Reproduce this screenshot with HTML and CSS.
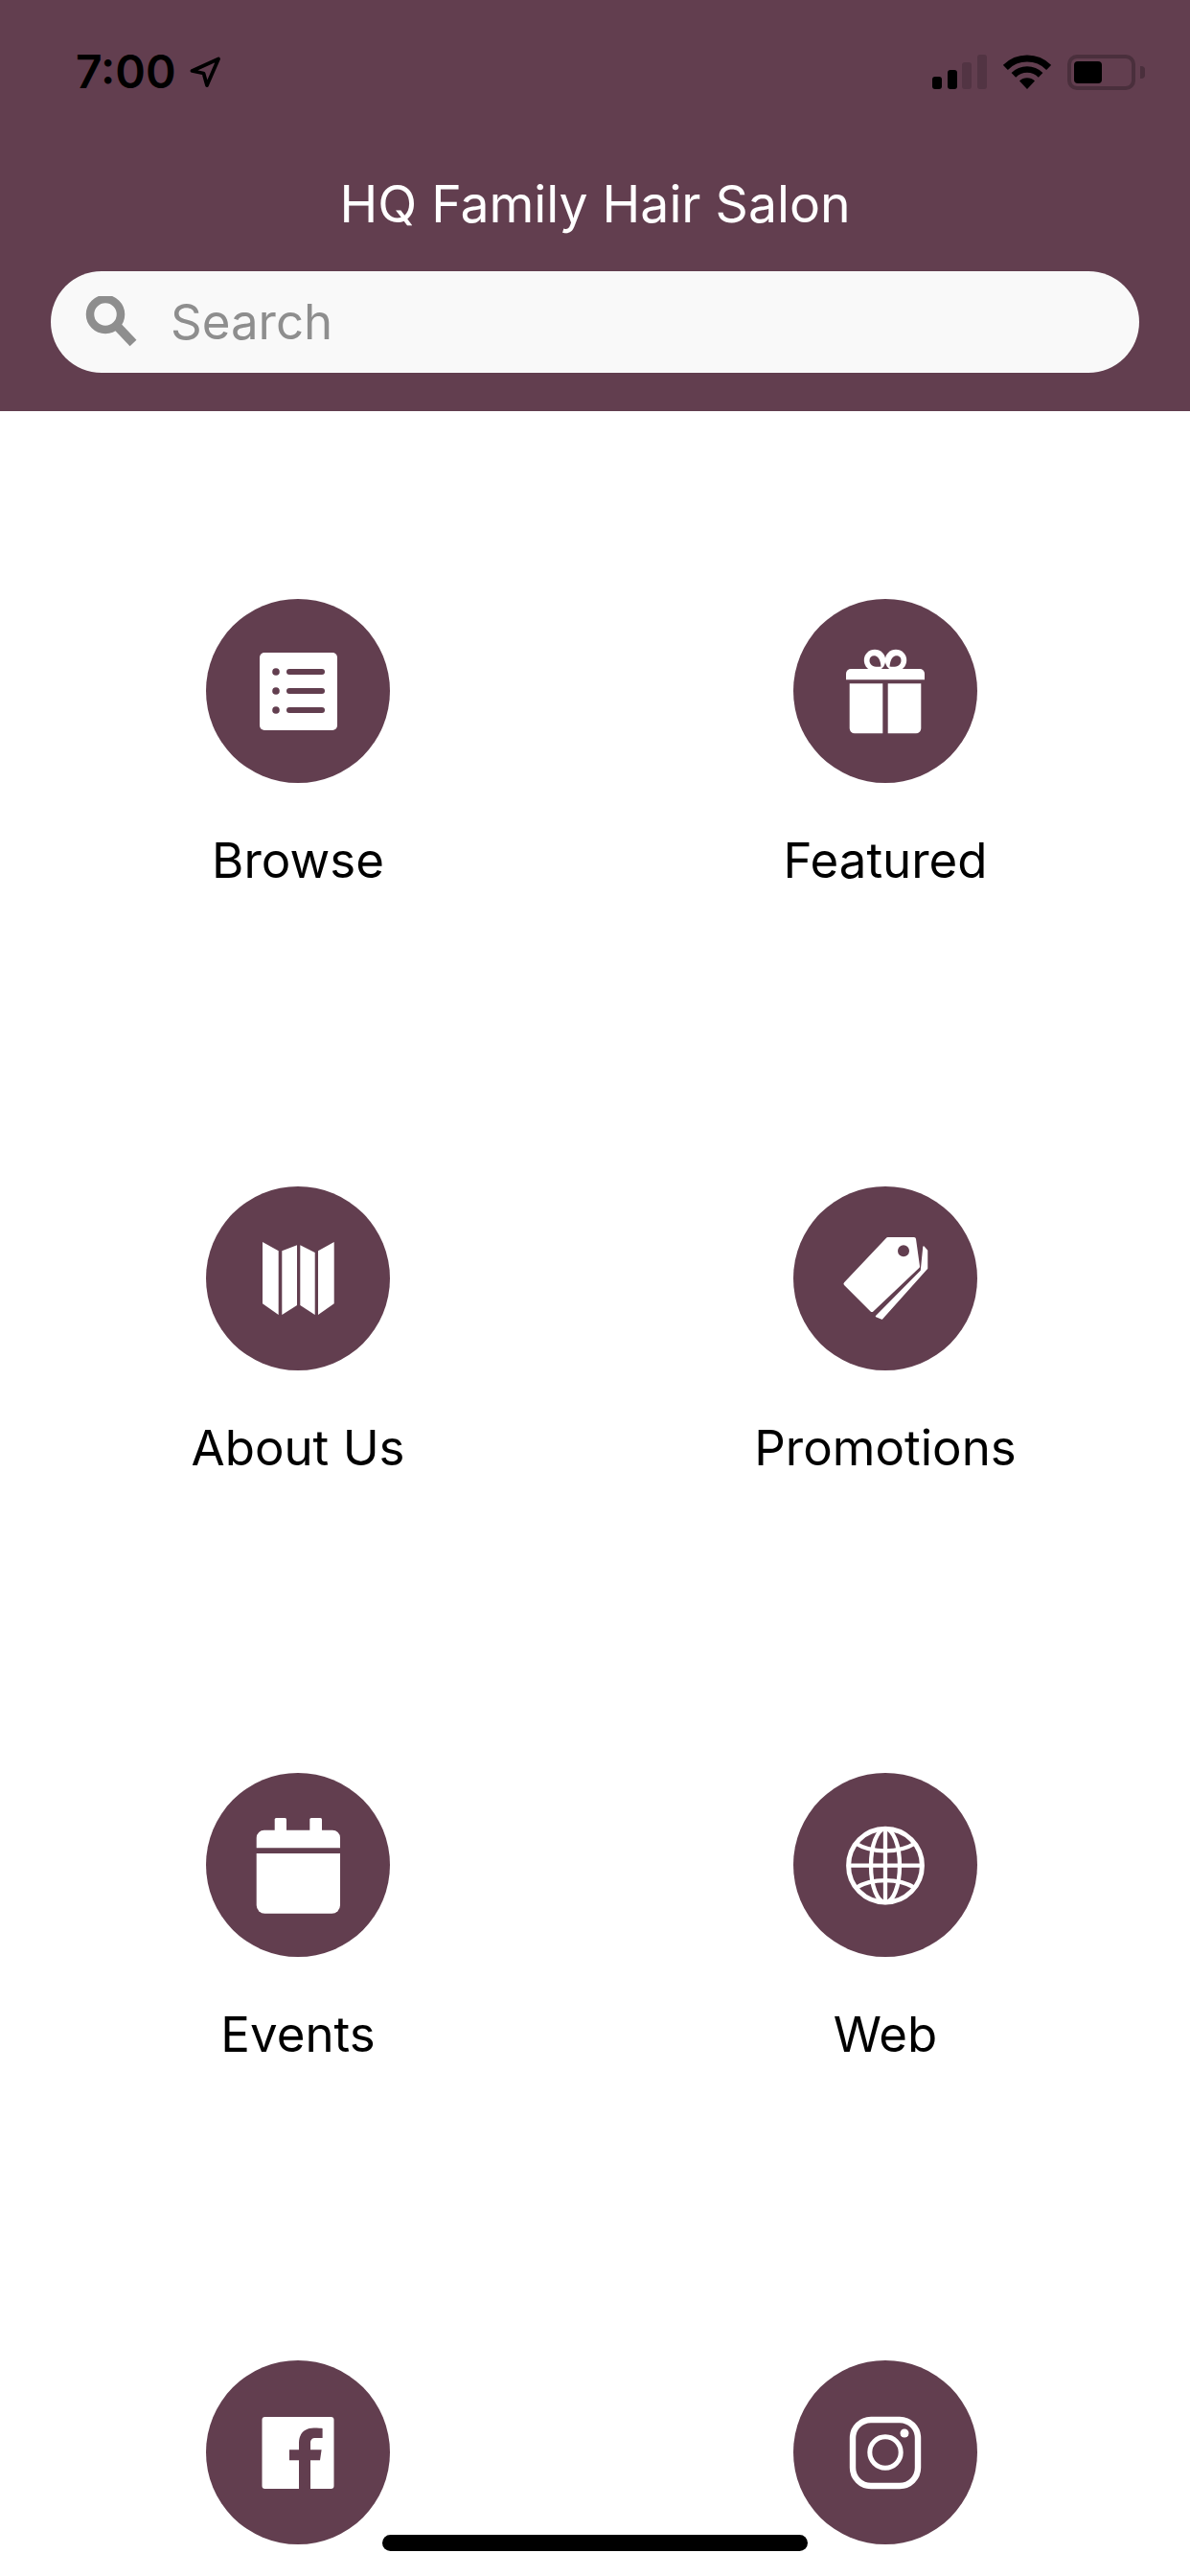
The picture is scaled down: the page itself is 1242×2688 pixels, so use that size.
FILE: index.html
```html
<!DOCTYPE html>
<html lang="en">

<head>
    <meta charset="UTF-8">
    <meta name="viewport" content="width=device-width, initial-scale=1.0">
    <title>HQ Family Hair Salon</title>
    <link rel="stylesheet" href="styles.css">
</head>

<body>
    <div class="screen">
        <header class="header">
            <div class="status">
                <div class="status-left">
                    <span class="time">7:00</span>
                    <svg class="arrow" width="32" height="32" viewBox="0 0 32 32">
                        <path d="M2.5 15 L30 2.5 L18 30 L14.5 17.5 Z" fill="none" stroke="#000" stroke-width="3.8" stroke-linejoin="round" />
                    </svg>
                </div>
                <div class="status-right">
                    <svg width="57" height="36" viewBox="0 0 57 36">
                        <rect x="0" y="23" width="10" height="13" rx="3" fill="#000" />
                        <rect x="16" y="16" width="10" height="20" rx="3" fill="#000" />
                        <rect x="31" y="8" width="10" height="28" rx="3" fill="#523443" />
                        <rect x="47" y="0" width="10" height="36" rx="3" fill="#523443" />
                    </svg>
                    <svg width="50" height="36" viewBox="0 0 50 36">
                        <path d="M2.4 13.4 A32 32 0 0 1 47.6 13.4" fill="none" stroke="#000" stroke-width="7" />
                        <path d="M10.9 21.4 A20 20 0 0 1 39.1 21.4" fill="none" stroke="#000" stroke-width="6.5" />
                        <path d="M25 36 L17 27.5 A11.5 11.5 0 0 1 33 27.5 Z" fill="#000" />
                    </svg>
                    <div class="battery">
                        <div class="battery-shell">
                            <div class="battery-fill"></div>
                        </div>
                        <div class="battery-cap"></div>
                    </div>
                </div>
            </div>
            <h1 class="title">HQ Family Hair Salon</h1>
            <div class="search">
                <svg class="search-icon" width="54" height="54" viewBox="0 0 54 54">
                    <circle cx="21" cy="19" r="16" fill="none" stroke="#8e8e8e" stroke-width="8.5" />
                    <path d="M33 31 L50 49" fill="none" stroke="#8e8e8e" stroke-width="9.5" />
                </svg>
                <span class="search-text">Search</span>
            </div>
        </header>

        <main class="grid">
            <div class="tile">
                <div class="circle">
                    <svg width="192" height="192" viewBox="0 0 192 192">
                        <rect x="56" y="56" width="81" height="81" rx="5" fill="#fff" />
                        <g fill="#623e4f">
                            <circle cx="73" cy="76" r="3.8" />
                            <circle cx="73" cy="96" r="3.8" />
                            <circle cx="73" cy="116" r="3.8" />
                        </g>
                        <g stroke="#623e4f" stroke-width="6" stroke-linecap="round">
                            <path d="M87 76 H121" />
                            <path d="M87 96 H121" />
                            <path d="M87 116 H121" />
                        </g>
                    </svg>
                </div>
                <div class="label">Browse</div>
            </div>
            <div class="tile">
                <div class="circle">
                    <svg width="192" height="192" viewBox="0 0 192 192">
                        <g fill="#fff">
                            <circle cx="85" cy="64" r="11.2" />
                            <circle cx="107" cy="64" r="11.2" />
                        </g>
                        <g fill="#623e4f">
                            <path d="M91.5 70.5 C85 71.5 79.5 70 79.5 64 C79.5 60 83 58.5 86 59.5 C90 61 91 66 91.5 70.5 Z" />
                            <path d="M100.5 70.5 C107 71.5 112.5 70 112.5 64 C112.5 60 109 58.5 106 59.5 C102 61 101 66 100.5 70.5 Z" />
                        </g>
                        <g fill="#fff">
                            <path d="M60 73 H132 A5 5 0 0 1 137 78 V84.3 H55 V78 A5 5 0 0 1 60 73 Z" />
                            <path d="M58.7 88.3 H93.3 V140.3 H64 A5.3 5.3 0 0 1 58.7 135 Z" />
                            <path d="M98.7 88.3 H133.3 V135 A5.3 5.3 0 0 1 128 140.3 H98.7 Z" />
                        </g>
                    </svg>
                </div>
                <div class="label">Featured</div>
            </div>
            <div class="tile">
                <div class="circle">
                    <svg width="192" height="192" viewBox="0 0 192 192">
                        <g fill="#fff">
                            <path d="M59 58 L75.7 67.3 V134 L59 122.3 Z" />
                            <path d="M79.3 67.3 L95 61.3 V124 L79.3 134 Z" />
                            <path d="M98.3 61.3 L113.7 69 V134 L98.3 124 Z" />
                            <path d="M117 67.3 L133.7 58 V122.3 L117 134 Z" />
                        </g>
                    </svg>
                </div>
                <div class="label">About Us</div>
            </div>
            <div class="tile">
                <div class="circle">
                    <svg width="192" height="192" viewBox="0 0 192 192">
                        <path d="M54.5 101.5 L98.5 55 H126 L130 83.5 L82 129 Z" fill="#fff" stroke="#fff" stroke-width="4" stroke-linejoin="round" />
                        <circle cx="115" cy="67.3" r="6" fill="#623e4f" />
                        <path d="M136 63 L139.5 67 V85.5 L92.5 138 L86.5 135.5 L133.5 88 Z" fill="#fff" stroke="#fff" stroke-width="1.5" stroke-linejoin="round" />
                    </svg>
                </div>
                <div class="label">Promotions</div>
            </div>
            <div class="tile">
                <div class="circle">
                    <svg width="192" height="192" viewBox="0 0 192 192">
                        <g fill="#fff">
                            <rect x="71.7" y="47" width="12.3" height="16" rx="1.5" />
                            <rect x="108.3" y="47" width="12.7" height="16" rx="1.5" />
                            <path d="M61 59.7 H132 A8 8 0 0 1 140 67.7 V78.3 H52.7 V67.7 A8 8 0 0 1 61 59.7 Z" />
                            <path d="M52.7 84 H140 V138 A8.7 8.7 0 0 1 131.3 146.7 H61.4 A8.7 8.7 0 0 1 52.7 138 Z" />
                        </g>
                    </svg>
                </div>
                <div class="label">Events</div>
            </div>
            <div class="tile">
                <div class="circle">
                    <svg width="192" height="192" viewBox="0 0 192 192">
                        <g fill="none" stroke="#fff" stroke-width="4.3">
                            <circle cx="96" cy="96.7" r="38.4" stroke-width="5" />
                            <ellipse cx="96" cy="96.7" rx="15" ry="38.4" />
                            <path d="M96 58 V135.3" />
                            <path d="M58 96.7 H134" />
                            <path d="M65 73.5 C82 84 110 84 127 73.5" />
                            <path d="M65 120 C82 109.5 110 109.5 127 120" />
                        </g>
                    </svg>
                </div>
                <div class="label">Web</div>
            </div>
            <div class="tile">
                <div class="circle">
                    <svg width="192" height="192" viewBox="0 0 192 192">
                        <rect x="58.5" y="59" width="75" height="75" rx="3" fill="#fff" />
                        <path d="M109 134 V104.3 H119 L120.6 93.3 H109 V86.5 C109 83 110.3 81 114.5 81 H121.6 V71 C120.4 70.8 116.8 70.6 112.6 70.6 C103.4 70.6 97 76 97 86 V93.3 H87 V104.3 H97 V134 Z" fill="#623e4f" />
                    </svg>
                </div>
            </div>
            <div class="tile">
                <div class="circle">
                    <svg width="192" height="192" viewBox="0 0 192 192">
                        <rect x="62" y="62" width="68" height="69" rx="19" fill="none" stroke="#fff" stroke-width="6.4" />
                        <circle cx="96" cy="96" r="16.2" fill="none" stroke="#fff" stroke-width="5" />
                        <circle cx="116" cy="76" r="4.5" fill="#fff" />
                    </svg>
                </div>
            </div>
        </main>

        <div class="home-bar"></div>
    </div>
</body>

</html>
```

FILE: styles.css
```css
* {
    padding: 0;
    margin: 0;
    box-sizing: border-box;
}

body {
    background-color: #fff;
    font-family: Inter, "Liberation Sans", sans-serif;
    color: #000;
}

.screen {
    position: relative;
    width: 1242px;
    height: 2688px;
    overflow: hidden;
}

.header {
    height: 429px;
    padding: 0 53px;
    background-color: #623e4f;
}

.status {
    display: flex;
    justify-content: space-between;
    align-items: center;
    height: 150px;
    margin: 0 -6px 0 26px;
}

.status-left {
    display: flex;
    align-items: center;
    gap: 14px;
}

.time {
    font-size: 48px;
    font-weight: 600;
    line-height: 60px;
}

.status-right {
    display: flex;
    align-items: center;
    gap: 17px;
}

.battery {
    display: flex;
    align-items: center;
    gap: 5px;
}

.battery-shell {
    width: 71px;
    height: 37px;
    padding: 3px;
    border: 4px solid #4a2f3c;
    border-radius: 10px;
}

.battery-fill {
    width: 29px;
    height: 100%;
    background-color: #000;
    border-radius: 4px;
}

.battery-cap {
    width: 5px;
    height: 13px;
    background-color: #4a2f3c;
    border-radius: 0 4px 4px 0;
}

.title {
    margin-top: 33px;
    font-size: 53.5px;
    font-weight: 400;
    line-height: 60px;
    text-align: center;
    color: #fff;
}

.search {
    display: flex;
    align-items: center;
    gap: 35px;
    height: 106px;
    margin-top: 40px;
    padding-left: 36px;
    background-color: #f9f9f9;
    border-radius: 53px;
}

.search-icon {
    flex: none;
}

.search-text {
    font-size: 51px;
    line-height: 60px;
    color: #8e8e8e;
}

.grid {
    display: grid;
    grid-template-columns: 613px 613px;
    grid-auto-rows: 612.5px;
    padding-left: 4.5px;
}

.tile {
    display: flex;
    flex-direction: column;
    align-items: center;
    padding-top: 196px;
}

.circle {
    width: 192px;
    height: 192px;
    background-color: #623e4f;
    border-radius: 50%;
}

.circle svg {
    display: block;
}

.label {
    margin-top: 51px;
    font-size: 51px;
    line-height: 60px;
    text-align: center;
}

.home-bar {
    position: absolute;
    left: 399px;
    top: 2645px;
    width: 444px;
    height: 17px;
    background-color: #000;
    border-radius: 9px;
}
```
